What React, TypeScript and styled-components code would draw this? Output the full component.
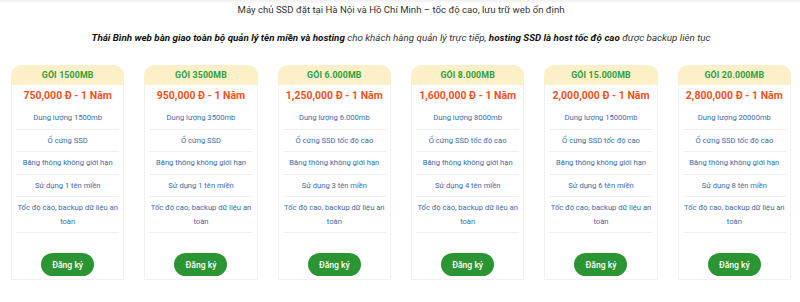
import React from "react";
import styled, { createGlobalStyle } from "styled-components";

const GlobalStyle = createGlobalStyle`
  html, body { margin: 0; padding: 0; background: #ffffff; }
  body { font-family: Roboto, "Noto Sans", Arial, sans-serif; }
  * { box-sizing: border-box; }
`;

const Page = styled.div`
  width: 800px;
  height: 302px;
  overflow: hidden;
  background: linear-gradient(#f0f0f0 0px, #ffffff 4px);
  padding: 2px 9px 0 11px;
`;

const Lead = styled.p`
  margin: 0;
  text-align: center;
  font-size: 9.6px;
  line-height: 16px;
  color: #333333;
`;

const Tagline = styled.p`
  margin: 12px 0 0;
  text-align: center;
  font-size: 9.8px;
  line-height: 16px;
  font-style: italic;
  color: #333333;
  b { font-weight: 700; color: #111111; }
`;

const Grid = styled.div`
  display: grid;
  grid-template-columns: repeat(6, 1fr);
  column-gap: 20px;
  margin-top: 19px;
`;

const Card = styled.div`
  display: flex;
  flex-direction: column;
  height: 215px;
`;

const CardHead = styled.div`
  height: 20px;
  line-height: 20px;
  background: #fcf0c9;
  border-radius: 10px 10px 0 0;
  text-align: center;
  color: #2e9d3b;
  font-weight: 700;
  font-size: 8.8px;
  letter-spacing: 0.15px;
`;

const CardBody = styled.div`
  flex: 1;
  display: flex;
  flex-direction: column;
  border: 1px solid #f1f1f1;
  border-top: none;
  padding: 0 4px;
`;

const Price = styled.div`
  height: 22px;
  line-height: 22px;
  text-align: center;
  color: #f4511e;
  font-weight: 700;
  font-size: 10.5px;
  white-space: nowrap;
`;

const Feature = styled.div`
  padding: 4px 0;
  line-height: 13.5px;
  text-align: center;
  color: #3a6ca6;
  font-size: 7.6px;
  white-space: nowrap;
  border-bottom: 1px solid #efefef;
`;

const Footer = styled.div`
  display: flex;
  justify-content: center;
  padding-top: 20px;
`;

const SignUp = styled.button`
  width: 53px;
  height: 23px;
  border: none;
  border-radius: 12px;
  background: #2b9533;
  color: #ffffff;
  font-family: Roboto, Arial, sans-serif;
  font-weight: 500;
  font-size: 8.6px;
  padding: 0;
  cursor: pointer;
`;

type Plan = { name: string; price: string; size: string; domains: number; ssd: string };

const plans: Plan[] = [
  { name: "GÓI 1500MB", price: "750,000 Đ - 1 Năm", size: "1500mb", domains: 1, ssd: "Ổ cứng SSD" },
  { name: "GÓI 3500MB", price: "950,000 Đ - 1 Năm", size: "3500mb", domains: 1, ssd: "Ổ cứng SSD" },
  { name: "GÓI 6.000MB", price: "1,250,000 Đ - 1 Năm", size: "6.000mb", domains: 3, ssd: "Ổ cứng SSD tốc độ cao" },
  { name: "GÓI 8.000MB", price: "1,600,000 Đ - 1 Năm", size: "8000mb", domains: 4, ssd: "Ổ cứng SSD tốc độ cao" },
  { name: "GÓI 15.000MB", price: "2,000,000 Đ - 1 Năm", size: "15000mb", domains: 6, ssd: "Ổ cứng SSD tốc độ cao" },
  { name: "GÓI 20.000MB", price: "2,800,000 Đ - 1 Năm", size: "20000mb", domains: 8, ssd: "Ổ cứng SSD tốc độ cao" },
];

export default function App() {
  return (
    <>
      <GlobalStyle />
      <Page>
        <Lead>Máy chủ SSD đặt tại Hà Nội và Hồ Chí Minh – tốc độ cao, lưu trữ web ổn định</Lead>
        <Tagline>
          <b>Thái Bình web bàn giao toàn bộ quản lý tên miền và hosting</b> cho khách hàng quản lý trực tiếp,{" "}
          <b>hosting SSD là host tốc độ cao</b> được backup liên tục
        </Tagline>
        <Grid>
          {plans.map((p) => (
            <Card key={p.name}>
              <CardHead>{p.name}</CardHead>
              <CardBody>
                <Price>{p.price}</Price>
                <Feature>Dung lượng {p.size}</Feature>
                <Feature>{p.ssd}</Feature>
                <Feature>Băng thông không giới hạn</Feature>
                <Feature>Sử dụng {p.domains} tên miền</Feature>
                <Feature>
                  Tốc độ cao, backup dữ liệu an
                  <br />
                  toàn
                </Feature>
                <Footer>
                  <SignUp>Đăng ký</SignUp>
                </Footer>
              </CardBody>
            </Card>
          ))}
        </Grid>
      </Page>
    </>
  );
}
